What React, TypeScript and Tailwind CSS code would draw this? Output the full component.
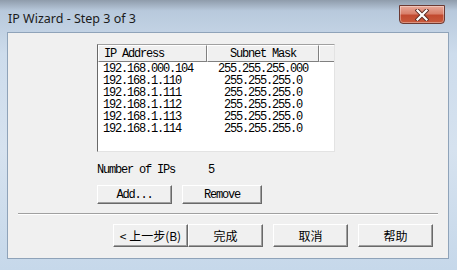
import React from "react";

const mono: React.CSSProperties = {};

const rows: [string, string][] = [
  ["192.168.000.104", "255.255.255.000"],
  ["192.168.1.110", "255.255.255.0"],
  ["192.168.1.111", "255.255.255.0"],
  ["192.168.1.112", "255.255.255.0"],
  ["192.168.1.113", "255.255.255.0"],
  ["192.168.1.114", "255.255.255.0"],
];

function Btn({ children, w, cjk }: { children: React.ReactNode; w: string; cjk?: boolean }) {
  return (
    <div
      className={`${w} h-full flex items-center justify-center bg-[#f0f0f0] border border-t-[#ffffff] border-l-[#ffffff] border-r-[#696969] border-b-[#696969] shadow-[inset_-1px_-1px_0_#a0a0a0] text-[12px] text-[#000] ${
        cjk
          ? "font-['Noto_Sans_CJK_SC','Liberation_Sans',sans-serif]"
          : "font-['Liberation_Mono',monospace] tracking-[-1.2px]"
      }`}
    >
      {children}
    </div>
  );
}

export default function App() {
  return (
    <div className="w-[457px] h-[270px] overflow-hidden flex flex-col bg-[linear-gradient(180deg,#8f9cab_0%,#b8c9dc_4%,#cddcec_20%,#d6e2ef_55%,#c6d8ea_100%)]">
      {/* title bar */}
      <div className="h-[32px] flex justify-between">
        <div className="pl-[8px] pt-[11px] text-[12.5px] leading-[16px] text-[#1b1b1b] font-['Noto_Sans','Liberation_Sans',sans-serif]">
          IP Wizard - Step 3 of 3
        </div>
        <div className="mt-[5px] mr-[12px] w-[46px] h-[19px] rounded-b-[4px] border border-[#6b3a33] bg-[linear-gradient(180deg,#e9a999_0%,#d9806b_45%,#c24a30_55%,#c85a3c_100%)] flex items-center justify-center shadow-[inset_0_0_0_1px_rgba(255,255,255,0.35)]">
          <svg width="14" height="12" viewBox="0 0 14 12">
            <path d="M2.5 1.5 L11.5 10.5 M11.5 1.5 L2.5 10.5" stroke="#5a2a22" strokeWidth="4" strokeLinecap="square" />
            <path d="M2.5 1.5 L11.5 10.5 M11.5 1.5 L2.5 10.5" stroke="#ffffff" strokeWidth="2.2" strokeLinecap="square" />
          </svg>
        </div>
      </div>

      {/* client area */}
      <div className="ml-[7px] w-[442px] h-[227px] bg-[#f0f0f0] border border-[#8fa3b9] flex flex-col">
        <div className="pl-[89px] pt-[11px] flex flex-col">
          {/* list view */}
          <div className="w-[238px] h-[108px] bg-white border border-t-[#a0a0a0] border-l-[#696969] border-r-[#e3e3e3] border-b-[#e3e3e3] flex flex-col font-['Liberation_Mono',monospace] text-[12px] tracking-[-1.2px] text-black">
            <div className="h-[17px] flex shrink-0">
              <div className="w-[109px] flex items-center pl-[5px] border-t border-l border-t-white border-l-white border-r border-b border-r-[#808080] border-b-[#808080] bg-[#f0f0f0]">
                IP Address
              </div>
              <div className="w-[112px] flex items-center justify-center border-t border-l border-t-white border-l-white border-r border-b border-r-[#808080] border-b-[#808080] bg-[#f0f0f0]">
                Subnet Mask
              </div>
              <div className="flex-1 border-t border-l border-t-white border-l-white border-b border-b-[#808080] bg-[#f0f0f0]" />
            </div>
            <div className="pt-[1px] flex flex-col">
              {rows.map(([ip, mask]) => (
                <div key={ip} className="h-[12px] flex items-center leading-[12px]">
                  <div className="w-[109px] pl-[5px]">{ip}</div>
                  <div className="w-[112px] text-center">{mask}</div>
                </div>
              ))}
            </div>
          </div>

          {/* number of IPs */}
          <div className="mt-[12px] h-[12px] flex items-center font-['Liberation_Mono',monospace] text-[12px] tracking-[-1.2px] text-black leading-[12px]">
            <div className="w-[111px]">Number of IPs</div>
            <div>5</div>
          </div>

          {/* add / remove */}
          <div className="mt-[9px] h-[19px] flex gap-[10px]">
            <Btn w="w-[75px]">Add...</Btn>
            <Btn w="w-[80px]">Remove</Btn>
          </div>
        </div>

        {/* separator */}
        <div className="mt-[9px] ml-[10px] w-[420px] h-[2px] border-t border-t-[#a0a0a0] border-b border-b-white" />

        {/* wizard buttons */}
        <div className="mt-[9px] pl-[105px] h-[23px] flex">
          <Btn w="w-[75px]" cjk>
            &lt; 上一步(B)
          </Btn>
          <Btn w="w-[75px]" cjk>
            完成
          </Btn>
          <div className="w-[10px]" />
          <Btn w="w-[75px]" cjk>
            取消
          </Btn>
          <div className="w-[10px]" />
          <Btn w="w-[75px]" cjk>
            帮助
          </Btn>
        </div>
      </div>
    </div>
  );
}
